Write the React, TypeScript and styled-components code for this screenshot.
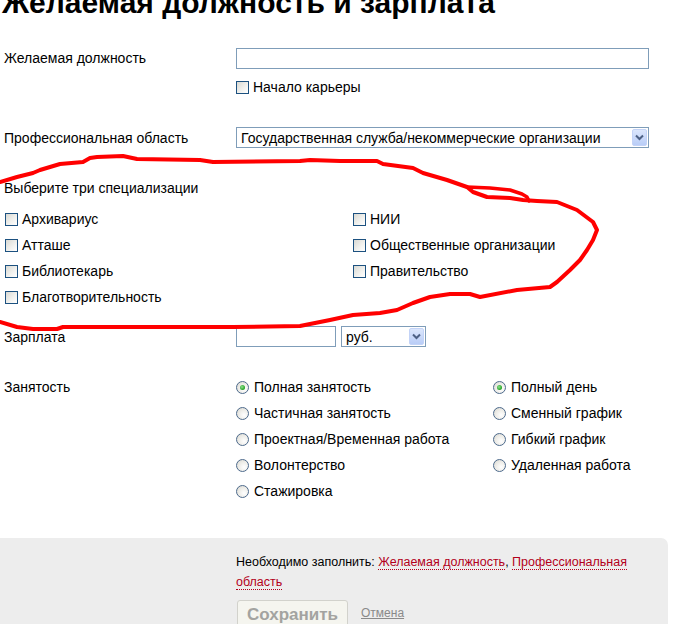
import * as React from 'react';
import styled, { createGlobalStyle } from 'styled-components';

const GlobalStyle = createGlobalStyle`
  html, body {
    margin: 0;
    padding: 0;
    background: #fff;
  }
  body {
    font-family: "Liberation Sans", Arial, sans-serif;
    font-size: 14px;
    color: #000;
  }
`;

const Page = styled.div`
  position: relative;
  width: 681px;
  height: 624px;
  overflow: hidden;
`;

const Title = styled.h1`
  margin: -14px 0 0 2px;
  font: bold 30px/34px "Liberation Sans", Arial, sans-serif;
`;

const Field = styled.div<{ $top: number; $align?: string }>`
  display: grid;
  grid-template-columns: 232px 1fr;
  align-items: ${(p) => p.$align || 'center'};
  padding-left: 4px;
  margin-top: ${(p) => p.$top}px;
`;

const Label = styled.div<{ $lh?: number }>`
  line-height: ${(p) => p.$lh || 16}px;
`;

const Control = styled.div`
  display: flex;
  flex-direction: column;
  align-items: flex-start;
  gap: 10px;
`;

const Inline = styled.div`
  display: flex;
  align-items: center;
  gap: 5px;
`;

const TextInput = styled.div<{ $w: number }>`
  box-sizing: border-box;
  width: ${(p) => p.$w}px;
  height: 21px;
  border: 1px solid #7f9db9;
  background: #fff;
`;

const Select = styled.div<{ $w: number }>`
  box-sizing: border-box;
  display: flex;
  align-items: center;
  justify-content: space-between;
  width: ${(p) => p.$w}px;
  height: 21px;
  padding: 0 1px 0 4px;
  border: 1px solid #7f9db9;
  background: #fff;
  line-height: 16px;
  white-space: nowrap;
`;

const Arrow = styled.span`
  display: flex;
  align-items: center;
  justify-content: center;
  width: 15px;
  height: 17px;
  border-radius: 2px;
  background: linear-gradient(#dbe6fc, #b9cdf7);
  border: 1px solid #c3d3f7;
  box-sizing: border-box;
`;

const Check = styled.label`
  display: flex;
  align-items: center;
  gap: 4px;
  line-height: 16px;
  white-space: nowrap;
`;

const Box = styled.span`
  box-sizing: border-box;
  width: 13px;
  height: 13px;
  border: 1px solid #1c5180;
  background: linear-gradient(135deg, #d9d9d3 0%, #f2f2ef 60%, #fff 100%);
`;

const Radio = styled.span<{ $on?: boolean }>`
  position: relative;
  box-sizing: border-box;
  width: 13px;
  height: 13px;
  border-radius: 50%;
  border: 1px solid #4d6a8c;
  background: radial-gradient(circle at 65% 65%, #fff 0%, #ecebe6 55%, #d4d3cc 100%);
  margin-right: 1px;

  &::after {
    content: '';
    display: ${(p) => (p.$on ? 'block' : 'none')};
    position: absolute;
    left: 3px;
    top: 3px;
    width: 5px;
    height: 5px;
    border-radius: 50%;
    background: radial-gradient(circle at 40% 40%, #8fe08f 0%, #21a121 70%);
  }
`;

const SpecGrid = styled.div`
  display: grid;
  grid-template-columns: 348px 1fr;
  grid-template-rows: repeat(4, 26px);
  grid-auto-flow: column;
  align-items: center;
  margin: 10px 0 0 5px;
`;

const RadioGrid = styled.div`
  display: grid;
  grid-template-columns: 257px 1fr;
  grid-template-rows: repeat(5, 26px);
  grid-auto-flow: column;
  align-items: center;
`;

const Panel = styled.div`
  margin: 34px 13px 0 0;
  padding: 14px 0 20px 236px;
  background: #ededed;
  border-radius: 0 7px 0 0;
`;

const Notice = styled.div`
  width: 393px;
  font-size: 12.5px;
  line-height: 20px;
`;

const Req = styled.span`
  color: #b3001b;
  border-bottom: 1px dotted #b3001b;
`;

const Actions = styled.div`
  display: flex;
  align-items: center;
  gap: 13px;
  margin-top: 8px;
`;

const SaveButton = styled.button`
  box-sizing: border-box;
  width: 111px;
  height: 30px;
  margin-left: 1px;
  border: 1px solid #d2d2cc;
  border-radius: 3px;
  background: #f5f5ef;
  color: #a3a3a0;
  font: bold 17px "Liberation Sans", Arial, sans-serif;
`;

const Cancel = styled.span`
  margin-top: -4px;
  font-size: 12px;
  color: #8a8a8a;
  text-decoration: underline;
`;

const Scribble = styled.svg`
  position: absolute;
  left: 0;
  top: 0;
  pointer-events: none;
`;

const specs = [
  'Архивариус',
  'Атташе',
  'Библиотекарь',
  'Благотворительность',
  'НИИ',
  'Общественные организации',
  'Правительство',
];

const employment: [string, boolean][] = [
  ['Полная занятость', true],
  ['Частичная занятость', false],
  ['Проектная/Временная работа', false],
  ['Волонтерство', false],
  ['Стажировка', false],
];

const schedule: [string, boolean][] = [
  ['Полный день', true],
  ['Сменный график', false],
  ['Гибкий график', false],
  ['Удаленная работа', false],
];

const Chevron = () => (
  <svg width="9" height="7" viewBox="0 0 9 7">
    <polyline points="1,1.5 4.5,5 8,1.5" fill="none" stroke="#4d6185" strokeWidth="2" />
  </svg>
);

const outline =
  'M0,182 L17,177 L33,173 L40,170 L60,164 L83,162 L90,158 L97,157 L123,156 L137,159 L200,160 L213,162 ' +
  'L300,161 L310,160 L340,161 L377,161 L383,164 L413,168 L423,173 L447,180 L467,187 L473,192 L487,197 ' +
  'L510,198 L523,200 L537,201 L557,202 L577,210 L593,222 L597,230 L593,240 L587,250 L580,260 L570,270 ' +
  'L557,282 L550,287 L517,290 L480,297 L470,294 L450,294 L430,297 L413,303 L397,310 L380,313 L353,315 ' +
  'L330,320 L320,322 L300,326 L233,327 L63,327 L57,329 L33,329 L17,327 L0,322';

const loop = 'M467,187 L490,188 L510,190 L522,194 L527,197 L529,201';

export default function App(): JSX.Element {
  return (
    <Page>
      <GlobalStyle />
      <Title>Желаемая должность и зарплата</Title>

      <Field $top={28} $align="start">
        <Label $lh={21}>Желаемая должность</Label>
        <Control>
          <TextInput $w={413} />
          <Check>
            <Box />
            Начало карьеры
          </Check>
        </Control>
      </Field>

      <Field $top={32}>
        <Label>Профессиональная область</Label>
        <Select $w={413}>
          Государственная служба/некоммерческие организации
          <Arrow>
            <Chevron />
          </Arrow>
        </Select>
      </Field>

      <Field $top={32}>
        <Label>Выберите три специализации</Label>
      </Field>
      <SpecGrid>
        {specs.map((s) => (
          <Check key={s}>
            <Box />
            {s}
          </Check>
        ))}
      </SpecGrid>

      <Field $top={16}>
        <Label>Зарплата</Label>
        <Inline>
          <TextInput $w={100} />
          <Select $w={85}>
            руб.
            <Arrow>
              <Chevron />
            </Arrow>
          </Select>
        </Inline>
      </Field>

      <Field $top={27} $align="start">
        <Label $lh={26}>Занятость</Label>
        <RadioGrid>
          {employment.map(([t, on]) => (
            <Check key={t}>
              <Radio $on={on} />
              {t}
            </Check>
          ))}
          {schedule.map(([t, on]) => (
            <Check key={t}>
              <Radio $on={on} />
              {t}
            </Check>
          ))}
        </RadioGrid>
      </Field>

      <Panel>
        <Notice>
          Необходимо заполнить: <Req>Желаемая должность</Req>, <Req>Профессиональная область</Req>
        </Notice>
        <Actions>
          <SaveButton>Сохранить</SaveButton>
          <Cancel>Отмена</Cancel>
        </Actions>
      </Panel>

      <Scribble width="681" height="624" viewBox="0 0 681 624">
        <path d={outline} fill="none" stroke="#f00" strokeWidth="4" strokeLinejoin="round" strokeLinecap="round" />
        <path d={loop} fill="none" stroke="#f00" strokeWidth="3.5" strokeLinejoin="round" strokeLinecap="round" />
      </Scribble>
    </Page>
  );
}
